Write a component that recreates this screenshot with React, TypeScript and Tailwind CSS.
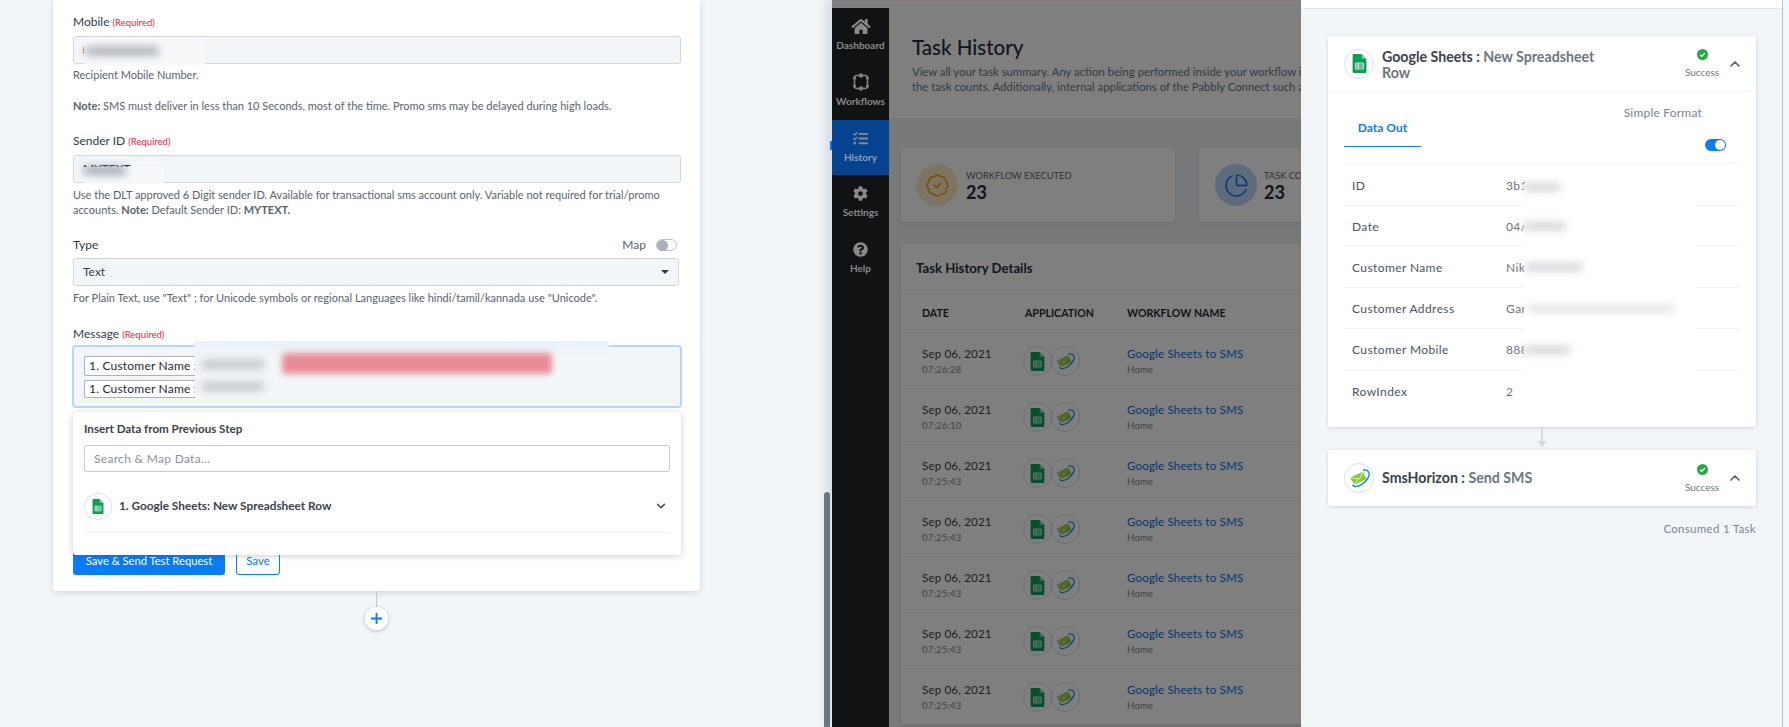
import { FaHome, FaCog, FaQuestionCircle, FaTasks } from "react-icons/fa";
import { ChevronDown, ChevronUp, PieChart, BadgeCheck } from "lucide-react";

const times = ["07:26:28", "07:26:10", "07:25:43", "07:25:43", "07:25:43", "07:25:43", "07:25:43"];

function SheetsIcon({ className }: { className?: string }) {
  return (
    <svg viewBox="0 0 16 22" className={className}>
      <path d="M1.5 0H10.5L16 5.5V20.5A1.5 1.5 0 0 1 14.5 22H1.5A1.5 1.5 0 0 1 0 20.5V1.5A1.5 1.5 0 0 1 1.5 0Z" fill="#0f9d58" />
      <path d="M10.5 0L16 5.5H12A1.5 1.5 0 0 1 10.5 4Z" fill="#87ceac" />
      <path d="M3.5 10.5H12.5V17.5H3.5ZM3.5 12.8H12.5M3.5 15.2H12.5M6.5 10.5V17.5" fill="none" stroke="#e8f5ee" strokeWidth="1" />
    </svg>
  );
}

function SmsIcon({ className }: { className?: string }) {
  return (
    <svg viewBox="0 0 24 22" className={className}>
      <path d="M1 10L16 3L20 12L6 18Z" fill="#8dc63f" />
      <path d="M1 10L12 11.5L16 3M6 18L10.5 11.5" fill="none" stroke="#e6f3cf" strokeWidth="1" />
      <path d="M16 1.5C22 0 24.5 4 22.5 9C20 15.5 11 21.5 6 20C5 19.7 4.2 19 4 18.3" fill="none" stroke="#1b8fd6" strokeWidth="1.7" />
    </svg>
  );
}

function WorkflowIcon() {
  return (
    <svg viewBox="0 0 18 18" className="h-[18px] w-[18px]" fill="none" stroke="#808080" strokeWidth="1.6">
      <rect x="2.5" y="2.5" width="13" height="13" rx="2.5" />
      <g fill="#808080" stroke="none">
        <circle cx="9" cy="2.5" r="2.2" />
        <circle cx="9" cy="15.5" r="2.2" />
        <circle cx="2.5" cy="5" r="1.6" />
        <circle cx="15.5" cy="5" r="1.6" />
        <circle cx="2.5" cy="13" r="1.6" />
        <circle cx="15.5" cy="13" r="1.6" />
      </g>
    </svg>
  );
}

function Required() {
  return <span className="ml-[3px] text-[9.5px] text-[#e3263c]">(Required)</span>;
}

function FieldLabel({ text, required }: { text: string; required?: boolean }) {
  return (
    <div className="h-4 text-[12px] leading-4 text-[#2f3b4a]">
      {text}
      {required && <Required />}
    </div>
  );
}

function Hint({ children }: { children: React.ReactNode }) {
  return <div className="text-[11px] leading-[15px] text-[#59636e]">{children}</div>;
}

function SideItem({ icon, label, active }: { icon: React.ReactNode; label: string; active?: boolean }) {
  return (
    <div className={`flex flex-col items-center pt-[9px] text-[#8a8a8a] ${active ? "h-[55px] bg-[#054390]" : "h-[56px]"}`}>
      <div className="flex h-[18px] items-center">{icon}</div>
      <div className={`mt-[3px] text-[10px] font-bold leading-[14px] ${active ? "text-[#8f9fb5]" : ""}`}>{label}</div>
    </div>
  );
}

function SuccessBadge() {
  return (
    <div className="flex w-[36px] flex-col items-center">
      <svg viewBox="0 0 12 12" className="h-[11px] w-[11px]">
        <circle cx="6" cy="6" r="6" fill="#28a745" />
        <path d="M3.3 6.2L5.2 8L8.7 4.4" fill="none" stroke="#fff" strokeWidth="1.4" />
      </svg>
      <div className="mt-[6px] text-[10px] leading-[12px] text-[#6c7680]">Success</div>
    </div>
  );
}

function LogoCircle({ children }: { children: React.ReactNode }) {
  return (
    <div className="flex h-[30px] w-[30px] shrink-0 items-center justify-center rounded-full border border-[#d5e1f4] bg-white">
      {children}
    </div>
  );
}

function DataRow({ label, value, last }: { label: string; value: string; last?: boolean }) {
  return (
    <div className={`flex h-[41px] items-center pl-2 pt-[2px] text-[12px] tracking-[0.4px] ${last ? "" : "border-b border-[#eef3fa]"}`}>
      <div className="w-[154px] text-[#4a545f]">{label}</div>
      <div className="text-[#6c7680]">{value}</div>
    </div>
  );
}

function FormPane() {
  return (
    <div className="relative w-[824px] shrink-0">
      <div className="ml-[53px] h-[591px] w-[647px] rounded-b-[3px] bg-white px-5 pt-[14px] shadow-[0_2px_6px_rgba(60,80,110,0.18)]">
        <FieldLabel text="Mobile" required />
        <div className="relative mt-[6px] h-[28px] w-[608px] rounded-[3px] border border-[#cfd6df] bg-[#f3f6f9]">
          <div className="absolute left-[9px] top-[10px] h-[7px] w-[2px] bg-[#c98a3a]" />
          <div className="absolute -bottom-[2px] left-[10px] top-0 flex w-[121px] items-center bg-[#f6f8fa]">
            <div className="ml-[1px] h-[8px] w-[74px] rounded-full bg-[#a4a8ad] blur-[4px]" />
          </div>
        </div>
        <div className="mt-[3px]">
          <Hint>Recipient Mobile Number.</Hint>
        </div>
        <div className="mt-4">
          <Hint>
            <b>Note:</b> SMS must deliver in less than 10 Seconds, most of the time. Promo sms may be delayed during high loads.
          </Hint>
        </div>
        <div className="mt-5">
          <FieldLabel text="Sender ID" required />
        </div>
        <div className="relative mt-[6px] flex h-[28px] w-[608px] items-center rounded-[3px] border border-[#cfd6df] bg-[#f3f6f9] pl-[9px] text-[12px] text-[#1f2933]">
          MYTEXT
          <div className="absolute -bottom-[2px] left-[10px] top-[11px] w-[80px] bg-[#f6f8fa]">
            <div className="h-[7px] w-[42px] bg-[#8c99a3] blur-[4px]" />
          </div>
        </div>
        <div className="mt-1 w-[600px]">
          <Hint>
            Use the DLT approved 6 Digit sender ID. Available for transactional sms account only. Variable not required for trial/promo accounts. <b>Note:</b> Default Sender ID: <b>MYTEXT.</b>
          </Hint>
        </div>
        <div className="mt-5 flex h-4 w-[604px] items-center justify-between text-[12px] text-[#2f3b4a]">
          <span>Type</span>
          <span className="flex items-center gap-[10px] text-[#59636e]">
            Map
            <span className="flex h-[12px] w-[21px] items-center rounded-full border border-[#b9c0c8] bg-white">
              <span className="h-[11px] w-[11px] rounded-full bg-[#a9b0b8]" />
            </span>
          </span>
        </div>
        <div className="mt-[5px] flex h-[28px] w-[606px] items-center justify-between rounded-[3px] border border-[#cfd6df] bg-[#f3f6f9] pl-[9px] pr-[9px] text-[12px] text-[#36404c]">
          Text
          <span className="h-0 w-0 border-x-[4px] border-t-[4px] border-x-transparent border-t-[#2f3b4a]" />
        </div>
        <div className="mt-1">
          <Hint>For Plain Text, use "Text" ; for Unicode symbols or regional Languages like hindi/tamil/kannada use "Unicode".</Hint>
        </div>
        <div className="mt-[21px]">
          <FieldLabel text="Message" required />
        </div>
        <div className="relative -ml-px mt-[3px] h-[63px] w-[610px] rounded-[4px] border-[2px] border-[#b8d8fb] bg-[#f3f6f9] pl-[10px] pt-[9px]">
          <div className="h-[20px] w-[111px] whitespace-nowrap rounded-l-[2px] border border-r-0 border-[#aab1b9] bg-white pl-1 text-[12px] leading-[18px] tracking-[0.2px] text-[#1f2933]">1. Customer Name :</div>
          <div className="mt-1 h-[18px] w-[111px] whitespace-nowrap rounded-l-[2px] border border-r-0 border-[#aab1b9] bg-white pl-1 text-[12px] leading-[16px] tracking-[0.2px] text-[#1f2933]">1. Customer Name :</div>
          <div className="absolute -top-[6px] bottom-[4px] left-[121px] w-[414px] bg-gradient-to-b from-[#e9f1f9] to-[#f3f6f9] to-30%">
            <div className="absolute left-[7px] top-[20px] h-[7px] w-[62px] bg-[#b6babd] blur-[4px]" />
            <div className="absolute left-[7px] top-[42px] h-[7px] w-[62px] bg-[#b6babd] blur-[4px]" />
            <div className="absolute left-[87px] top-[12px] h-[21px] w-[270px] rounded-[4px] bg-[#e88c97] blur-[3px]" />
          </div>
        </div>
        <div className="mt-[139px] flex items-center gap-[11px]">
          <button className="h-[28px] w-[152px] rounded-b-[3px] bg-[#0a7cf7] text-[11.2px] text-white">Save &amp; Send Test Request</button>
          <button className="h-[28px] w-[44px] rounded-b-[3px] border border-[#0a7cf7] bg-white text-[11.5px] text-[#0a7cf7]">Save</button>
        </div>
      </div>

      <div className="absolute left-[73px] top-[412px] h-[143px] w-[608px] rounded-[3px] bg-white px-[11px] pt-[10px] shadow-[0_1px_6px_rgba(40,50,70,0.25)]">
        <div className="text-[11.6px] font-bold leading-[14px] text-[#3a424c]">Insert Data from Previous Step</div>
        <div className="mt-[9px] flex h-[27px] items-center rounded-[2px] border border-[#c9ced4] pl-[9px] text-[12px] tracking-[0.3px] text-[#8a929b]">Search &amp; Map Data...</div>
        <div className="mt-5 flex h-[28px] items-center">
          <div className="flex h-[27px] w-[28px] items-center justify-center rounded-full border border-[#d5e1f4]">
            <SheetsIcon className="h-[15px] w-[12px]" />
          </div>
          <div className="ml-[7px] flex-1 text-[11.8px] font-bold text-[#3a424c]">1. Google Sheets: New Spreadsheet Row</div>
          <ChevronDown className="mr-[2px] h-[14px] w-[14px] text-[#333b44]" strokeWidth={2.4} />
        </div>
        <div className="mt-3 border-b border-[#eaf2fb]" />
      </div>

      <div className="ml-[376px] h-[16px] w-[1px] bg-[#c4c8cd]" />
      <div className="ml-[365px] flex h-[23px] w-[23px] items-center justify-center rounded-full bg-white shadow-[0_1px_4px_rgba(40,50,70,0.3)]">
        <svg viewBox="0 0 12 12" className="h-[11px] w-[11px]" stroke="#0a7cf7" strokeWidth="2">
          <path d="M6 0V12M0 6H12" />
        </svg>
      </div>
    </div>
  );
}

function HistoryPane() {
  return (
    <div className="z-10 flex w-[469px] shrink-0 flex-col shadow-[-6px_0_10px_rgba(40,60,90,0.15)]">
      <div className="h-[8px] border-b border-[#7c8896] bg-[#808080]" />
      <div className="flex flex-1 overflow-hidden">
        <div className="w-[57px] shrink-0 bg-[#111214]">
          <SideItem icon={<FaHome className="h-[17px] w-[20px]" />} label="Dashboard" />
          <SideItem icon={<WorkflowIcon />} label="Workflows" />
          <SideItem icon={<FaTasks className="h-[15px] w-[15px]" />} label="History" active />
          <SideItem icon={<FaCog className="h-[15px] w-[15px]" />} label="Settings" />
          <SideItem icon={<FaQuestionCircle className="h-[15px] w-[15px]" />} label="Help" />
        </div>
        <div className="relative min-w-0 flex-1 overflow-hidden bg-[#eef1f5]">
          <div className="h-[110px] whitespace-nowrap bg-white pl-[23px] pt-[24px]">
            <div className="text-[20.5px] font-medium leading-[30px] text-[#1f2d3d]">Task History</div>
            <div className="mt-[2px] text-[11.3px] leading-[15px] text-[#6a7580]">View all your task summary. Any action being performed inside your workflow is counted in</div>
            <div className="text-[11.3px] leading-[15px] text-[#6a7580]">the task counts. Additionally, internal applications of the Pabbly Connect such as filter, router</div>
          </div>
          <div className="ml-3 mt-[30px] flex w-[700px] gap-6">
            <div className="flex h-[74px] w-[274px] items-center rounded-[3px] bg-white pl-[15px] shadow-[0_1px_3px_rgba(40,50,70,0.15)]">
              <div className="flex h-[42px] w-[42px] items-center justify-center rounded-full bg-[#fde9c4]">
                <BadgeCheck className="h-[25px] w-[25px] text-[#f0a020]" strokeWidth={1.6} />
              </div>
              <div className="ml-[8px]">
                <div className="text-[9.3px] leading-[13px] text-[#5a6470]">WORKFLOW EXECUTED</div>
                <div className="text-[18px] font-bold leading-[20px] text-[#1f2d3d]">23</div>
              </div>
            </div>
            <div className="flex h-[74px] w-[274px] items-center rounded-[3px] bg-white pl-[16px] shadow-[0_1px_3px_rgba(40,50,70,0.15)]">
              <div className="flex h-[42px] w-[42px] items-center justify-center rounded-full bg-[#bcd6fb]">
                <PieChart className="h-[25px] w-[25px] text-[#0a6cf0]" strokeWidth={1.4} />
              </div>
              <div className="ml-[7px]">
                <div className="text-[9.3px] leading-[13px] text-[#5a6470]">TASK CONSUMED</div>
                <div className="text-[18px] font-bold leading-[20px] text-[#1f2d3d]">23</div>
              </div>
            </div>
          </div>
          <div className="ml-3 mt-[22px] w-[700px] rounded-t-[3px] bg-white shadow-[0_1px_3px_rgba(40,50,70,0.15)]">
            <div className="flex h-[51px] items-center border-b border-[#eef1f5] pl-[15px] text-[13.2px] font-bold text-[#1f2d3d]">Task History Details</div>
            <div className="flex h-[38px] items-center border-b border-[#eef1f5] pl-[21px] text-[10.6px] font-bold text-[#1f2933]">
              <div className="w-[103px]">DATE</div>
              <div className="w-[102px]">APPLICATION</div>
              <div>WORKFLOW NAME</div>
            </div>
            {times.map((t, i) => (
              <div key={i} className="flex h-[56px] items-center border-b border-[#eef1f5] pl-[21px] pt-[1px]">
                <div className="w-[103px]">
                  <div className="text-[11.5px] leading-[16px] tracking-[0.2px] text-[#36404c]">Sep 06, 2021</div>
                  <div className="mt-[1px] text-[9.5px] leading-[14px] tracking-[0.2px] text-[#7b8590]">{t}</div>
                </div>
                <div className="-ml-[2px] flex w-[104px]">
                  <div className="flex h-[30px] w-[29px] items-center justify-center rounded-full border border-[#cfdcf0]">
                    <SheetsIcon className="h-[19px] w-[15px]" />
                  </div>
                  <div className="-ml-px flex h-[30px] w-[29px] items-center justify-center rounded-full border border-[#cfdcf0]">
                    <SmsIcon className="h-[17px] w-[19px]" />
                  </div>
                </div>
                <div>
                  <div className="text-[11.5px] leading-[16px] tracking-[0.2px] text-[#0a6cdc]">Google Sheets to SMS</div>
                  <div className="mt-[1px] text-[9.5px] leading-[14px] tracking-[0.2px] text-[#7b8590]">Home</div>
                </div>
              </div>
            ))}
          </div>
          <div className="absolute inset-0 bg-black/50" />
        </div>
      </div>
    </div>
  );
}

function RunPanel() {
  return (
    <div className="relative z-20 w-[482px] shrink-0 border-r border-[#b4bac1] bg-[#f3f6f9]">
      <div className="h-[9px] border-b border-[#dbe5f3] bg-white" />
      <div className="ml-[27px] mt-[27px] h-[391px] w-[428px] rounded-[3px] bg-white shadow-[0_1px_4px_rgba(60,80,110,0.2)]">
        <div className="flex h-[56px] items-center border-b border-[#eef3fa] pl-4 pr-4">
          <LogoCircle>
            <SheetsIcon className="h-[19px] w-[15px]" />
          </LogoCircle>
          <div className="ml-2 w-[235px] pt-[2px] text-[14.2px] font-bold leading-[16px] text-[#3a424c]">
            Google Sheets : <span className="text-[#6c7680]">New Spreadsheet Row</span>
          </div>
          <div className="ml-auto mr-[7px]">
            <SuccessBadge />
          </div>
          <ChevronUp className="mr-[-3px] h-[16px] w-[16px] text-[#5a6470]" strokeWidth={2.6} />
        </div>
        <div className="mx-4 flex h-[72px] justify-between border-b border-[#eef3fa]">
          <div className="mt-[27px] flex h-[28px] w-[77px] items-start justify-center border-b border-[#0a7cf7] text-[12px] font-bold text-[#0a7cf7]">Data Out</div>
          <div className="mr-[14px] mt-[12px] flex flex-col items-end">
            <div className="mr-[24px] text-[12px] tracking-[0.2px] text-[#7b8590]">Simple Format</div>
            <div className="mt-[17px] flex h-[12px] w-[21px] items-center justify-end rounded-full bg-[#0a7cf7] pr-px">
              <span className="h-[10px] w-[10px] rounded-full bg-white" />
            </div>
          </div>
        </div>
        <div className="relative mx-4 mt-[1px]">
          <DataRow label="ID" value="3b1" />
          <DataRow label="Date" value="04/" />
          <DataRow label="Customer Name" value="Nik" />
          <DataRow label="Customer Address" value="Gar" />
          <DataRow label="Customer Mobile" value="888" />
          <DataRow label="RowIndex" value="2" last />
          <div className="absolute left-[180px] top-[18px] h-[188px] w-[172px] bg-white">
            <div className="absolute left-0 top-[1px] h-[6px] w-[36px] bg-[#c4c7cb] blur-[4px]" />
            <div className="absolute left-0 top-[40px] h-[6px] w-[42px] bg-[#c4c7cb] blur-[4px]" />
            <div className="absolute left-[2px] top-[81px] h-[6px] w-[56px] bg-[#c4c7cb] blur-[4px]" />
            <div className="absolute left-[4px] top-[123px] h-[5px] w-[146px] bg-[#d0d3d6] blur-[4px]" />
            <div className="absolute left-0 top-[164px] h-[6px] w-[46px] bg-[#c4c7cb] blur-[4px]" />
          </div>
        </div>
      </div>
      <div className="ml-[236px] flex h-[23px] w-[10px] flex-col items-center">
        <div className="h-[14px] w-[2px] bg-[#d5d9df]" />
        <div className="h-0 w-0 border-x-[5px] border-t-[6px] border-x-transparent border-t-[#d5d9df]" />
      </div>
      <div className="ml-[27px] flex h-[56px] w-[428px] items-center rounded-[3px] bg-white pl-4 pr-4 shadow-[0_1px_4px_rgba(60,80,110,0.2)]">
        <LogoCircle>
          <SmsIcon className="h-[19px] w-[21px]" />
        </LogoCircle>
        <div className="ml-2 text-[14.2px] font-bold text-[#3a424c]">
          SmsHorizon : <span className="text-[#6c7680]">Send SMS</span>
        </div>
        <div className="ml-auto mr-[7px]">
          <SuccessBadge />
        </div>
        <ChevronUp className="mr-[-3px] h-[16px] w-[16px] text-[#5a6470]" strokeWidth={2.6} />
      </div>
      <div className="ml-[27px] mt-[15px] w-[428px] text-right text-[11.5px] leading-4 tracking-[0.3px] text-[#7b8590]">Consumed 1 Task</div>
    </div>
  );
}

export default function App() {
  return (
    <div className="flex h-[727px] w-[1789px] overflow-hidden bg-[#f3f6f9] font-['Lato','Liberation_Sans',sans-serif]">
      <FormPane />
      <div className="flex w-[6px] shrink-0 flex-col justify-end">
        <div className="h-[235px] rounded-t-[3px] bg-[#6f7d87]" />
      </div>
      <div className="w-[2px] shrink-0 bg-[#f3f8fc] pt-[141px]">
        <div className="h-[9px] bg-[#0a7cf7]" />
      </div>
      <HistoryPane />
      <RunPanel />
      <div className="flex-1 bg-[#f3f8fc]" />
    </div>
  );
}
